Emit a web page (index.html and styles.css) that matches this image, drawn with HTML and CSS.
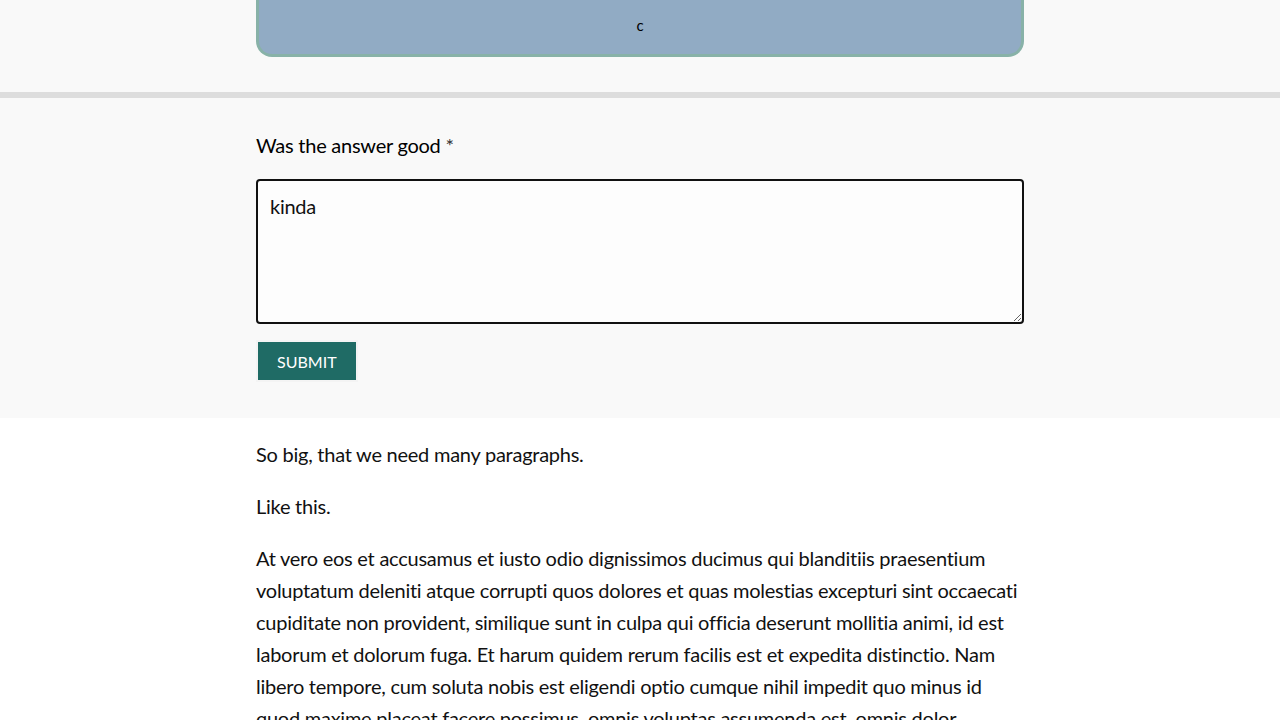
FILE: index.html
```html
<!DOCTYPE html>
<html>
<head>
<meta charset="utf-8">
<link rel="stylesheet" href="styles.css">
</head>
<body>
<section class="top">
  <div class="wrap">
    <div class="banner">c</div>
  </div>
</section>
<section class="feedback">
  <div class="wrap">
    <label class="label" for="answer">Was the answer good <span class="req">*</span></label>
    <textarea id="answer" class="field">kinda</textarea>
    <button class="submit">SUBMIT</button>
  </div>
</section>
<main class="wrap content">
  <p>So big, that we need many paragraphs.</p>
  <p>Like this.</p>
  <p>At vero eos et accusamus et iusto odio dignissimos ducimus qui blanditiis praesentium voluptatum deleniti atque corrupti quos dolores et quas molestias excepturi sint occaecati cupiditate non provident, similique sunt in culpa qui officia deserunt mollitia animi, id est laborum et dolorum fuga. Et harum quidem rerum facilis est et expedita distinctio. Nam libero tempore, cum soluta nobis est eligendi optio cumque nihil impedit quo minus id quod maxime placeat facere possimus, omnis voluptas assumenda est, omnis dolor repellendus.</p>
</main>
</body>
</html>
```
FILE: styles.css
```css
html, body {
  margin: 0;
  padding: 0;
  background: #ffffff;
  color: #111;
  font-family: Lato, "Liberation Sans", sans-serif;
  font-size: 20px;
  line-height: 32px;
  font-variant-ligatures: none;
  letter-spacing: -0.25px;
}
.wrap {
  width: 768px;
  margin: 0 auto;
}
.top {
  background: #f9f9f9;
  height: 92px;
  border-bottom: 6px solid #dddddd;
}
.banner {
  box-sizing: border-box;
  height: 57px;
  background: #91abc4;
  border: 3px solid #88b2a8;
  border-top: none;
  border-radius: 0 0 16px 16px;
  display: flex;
  align-items: center;
  justify-content: center;
  padding-bottom: 4px;
  font-size: 15px;
  line-height: 20px;
  letter-spacing: 0;
  color: #000;
}
.feedback {
  background: #f9f9f9;
  padding: 29px 0 36px;
}
.label {
  display: block;
  font-size: 20px;
  line-height: 36px;
  color: #000;
}
.req {
  color: #333;
}
.field {
  display: block;
  box-sizing: border-box;
  width: 768px;
  height: 145px;
  margin-top: 16px;
  padding: 9px 12px 10px;
  border: 2px solid #111;
  border-radius: 4px;
  background: #fdfdfd;
  font-family: Lato, "Liberation Sans", sans-serif;
  font-size: 20px;
  line-height: 32px;
  letter-spacing: -0.25px;
  font-variant-ligatures: none;
  color: #111;
  resize: vertical;
}
.submit {
  display: block;
  margin: 16px 0 0 0;
  box-sizing: border-box;
  height: 42px;
  padding: 0 19px;
  background: #1f6b65;
  border: 2px solid #f4f4f4;
  color: #fff;
  font-family: Lato, "Liberation Sans", sans-serif;
  font-size: 16px;
  letter-spacing: 0;
}
.content {
  padding-top: 20px;
}
.content p {
  margin: 0 0 20px;
}
```
